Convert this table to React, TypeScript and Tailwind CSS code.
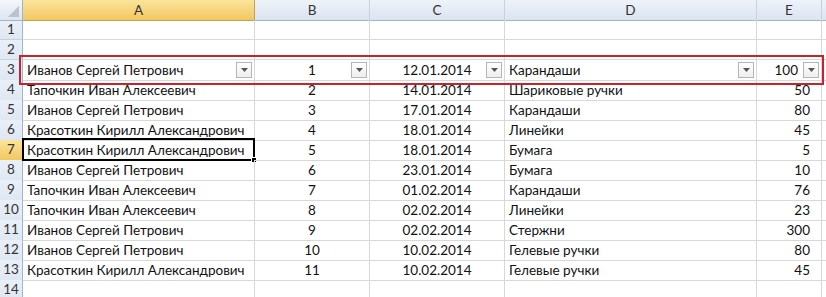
import React from 'react';

type Row = [string, string, string, string, string];

const rows: Row[] = [
  ['', '', '', '', ''],
  ['', '', '', '', ''],
  ['Иванов Сергей Петрович', '1', '12.01.2014', 'Карандаши', '100'],
  ['Тапочкин Иван Алексеевич', '2', '14.01.2014', 'Шариковые ручки', '50'],
  ['Иванов Сергей Петрович', '3', '17.01.2014', 'Карандаши', '80'],
  ['Красоткин Кирилл Александрович', '4', '18.01.2014', 'Линейки', '45'],
  ['Красоткин Кирилл Александрович', '5', '18.01.2014', 'Бумага', '5'],
  ['Иванов Сергей Петрович', '6', '23.01.2014', 'Бумага', '10'],
  ['Тапочкин Иван Алексеевич', '7', '01.02.2014', 'Карандаши', '76'],
  ['Тапочкин Иван Алексеевич', '8', '02.02.2014', 'Линейки', '23'],
  ['Иванов Сергей Петрович', '9', '02.02.2014', 'Стержни', '300'],
  ['Иванов Сергей Петрович', '10', '10.02.2014', 'Гелевые ручки', '80'],
  ['Красоткин Кирилл Александрович', '11', '10.02.2014', 'Гелевые ручки', '45'],
  ['', '', '', '', ''],
];

const cols = ['A', 'B', 'C', 'D', 'E'];
const gridCols = 'grid grid-cols-[23px_232px_115px_135px_252px_65px_1fr]';

// Small autofilter dropdown button
const FilterButton = () => (
  <div className="absolute right-[2px] top-[2px] w-[16px] h-[16px] border border-[#b5b5b5] bg-gradient-to-b from-white to-[#eeeeee] flex items-center justify-center">
    <svg width="7" height="4" viewBox="0 0 7 4">
      <path d="M0 0h7L3.5 4z" fill="#555" />
    </svg>
  </div>
);

const App: React.FC = () => {
  return (
    <div
      className="relative w-[826px] h-[297px] overflow-hidden bg-white text-[13.5px] text-[#111]"
      style={{ fontFamily: 'Lato, "Liberation Sans", sans-serif' }}
    >
      {/* Column headers */}
      <div className={`${gridCols} h-[20px]`}>
        <div className="relative border-r border-b border-[#9eb6ce] bg-gradient-to-b from-[#f4f7fb] to-[#dde5f0]">
          <svg className="absolute right-[3px] bottom-[3px]" width="11" height="11" viewBox="0 0 11 11">
            <path d="M11 0v11H0z" fill="#b8c3d0" />
          </svg>
        </div>
        {cols.map((c) => (
          <div
            key={c}
            className={`flex items-center justify-center border-r border-b text-[13.5px] text-[#333] ${
              c === 'A'
                ? 'bg-gradient-to-b from-[#fbe49a] to-[#f2c760] border-[#c2a250]'
                : 'bg-gradient-to-b from-[#eef3fa] to-[#dbe4f0] border-[#c5d2e0] border-b-[#9eb6ce]'
            }`}
          >
            {c}
          </div>
        ))}
        <div className="border-b border-[#9eb6ce] bg-gradient-to-b from-[#eef3fa] to-[#dbe4f0]" />
      </div>

      {/* Rows */}
      {rows.map((r, i) => {
        const n = i + 1;
        const isFilter = n === 3;
        const isActive = n === 7;
        return (
          <div key={n} className={`${gridCols} h-[20px]`}>
            <div
              className={`flex items-start pt-[1px] leading-[16px] justify-center border-r border-b text-[13.5px] text-[#333] ${
                isActive
                  ? 'bg-gradient-to-b from-[#fbe49a] to-[#f2c760] border-[#c2a250]'
                  : 'bg-gradient-to-b from-[#eaf0f8] to-[#dfe7f2] border-b-[#c5d2e0] border-r-[#9eb6ce]'
              }`}
            >
              {n}
            </div>
            <div className="relative flex items-center pl-[4px] border-r border-b border-[#d8d8d8] whitespace-nowrap">
              {r[0]}
              {isFilter && <FilterButton />}
              {isActive && (
                <div className="absolute -left-[1px] -top-[2px] -right-[1px] -bottom-[1px] border-2 border-black">
                  <div className="absolute -right-[4px] -bottom-[4px] w-[6px] h-[6px] bg-black border border-white" />
                </div>
              )}
            </div>
            <div className="relative flex items-center justify-center border-r border-b border-[#d8d8d8]">
              {r[1]}
              {isFilter && <FilterButton />}
            </div>
            <div className="relative flex items-center justify-center border-r border-b border-[#d8d8d8]">
              {r[2]}
              {isFilter && <FilterButton />}
            </div>
            <div className="relative flex items-center pl-[4px] border-r border-b border-[#d8d8d8]">
              {r[3]}
              {isFilter && <FilterButton />}
            </div>
            <div
              className={`relative flex items-center justify-end border-r border-b border-[#d8d8d8] ${
                isFilter ? 'pr-[23px]' : 'pr-[11px]'
              }`}
            >
              {r[4]}
              {isFilter && <FilterButton />}
            </div>
            <div className="border-b border-[#d8d8d8]" />
          </div>
        );
      })}

      {/* Red annotation frame around the header row */}
      <div className="absolute left-[19px] top-[55px] w-[805px] h-[30px] border-2 border-[#c8232c]" />
    </div>
  );
};

export default App;
